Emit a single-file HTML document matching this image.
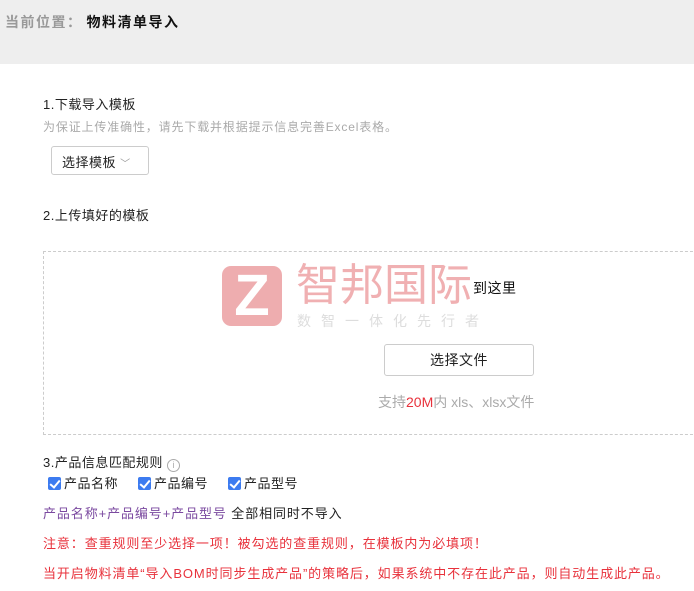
<!DOCTYPE html>
<html><head><meta charset="utf-8"><style>
*{margin:0;padding:0;box-sizing:border-box}
body{width:694px;height:591px;overflow:hidden;background:#fff;font-family:"Liberation Sans","Noto Sans CJK SC",sans-serif;font-size:13px;color:#222;position:relative;letter-spacing:0.5px}
.a{position:absolute;white-space:nowrap}
.hdr{position:absolute;left:0;top:0;width:694px;height:64px;background:#eee}
.cb{display:inline-block;width:13px;height:13px;background:#3c7bf0;border-radius:2px;vertical-align:-2px;margin-right:3px;position:relative}
.cb:after{content:"";position:absolute;left:4px;top:1px;width:4px;height:8px;border:solid #fff;border-width:0 2px 2px 0;transform:rotate(40deg)}
.w{letter-spacing:0.9px}
</style></head><body>
<div class="hdr"></div>
<div class="a" style="left:5px;top:12px;font-size:14px;color:#999;font-weight:bold;letter-spacing:1.5px">当前位置：<span style="color:#111;margin-left:4px">物料清单导入</span></div>
<div class="a" style="left:43px;top:94px">1.下载导入模板</div>
<div class="a" style="left:43px;top:118px;font-size:12px;color:#aaa;letter-spacing:0.85px">为保证上传准确性，请先下载并根据提示信息完善Excel表格。</div>
<div class="a" style="left:51px;top:146px;width:98px;height:29px;border:1px solid #ccc;border-radius:3px;padding:5px 0 0 10px">选择模板 <span style="color:#999;font-size:10px">﹀</span></div>
<div class="a" style="left:43px;top:205px">2.上传填好的模板</div>
<div class="a" style="left:43px;top:251px;width:660px;height:184px;border:1px dashed #ccc;border-right:none"></div>
<div class="a" style="left:222px;top:266px;width:60px;height:60px;background:#eeadaf;border-radius:9px;color:#fff;font-size:58px;font-weight:bold;line-height:60px;text-align:center;font-family:'Liberation Sans',sans-serif;letter-spacing:0">Z</div>
<div class="a" style="left:296px;top:260px;font-size:44px;color:#f0b0b2;letter-spacing:0;line-height:52px">智邦国际</div>
<div class="a" style="left:297px;top:311px;font-size:14px;color:#ddd;letter-spacing:10px">数智一体化先行者</div>
<div class="a" style="left:473px;top:278px;font-size:14px;color:#111">到这里</div>
<div class="a" style="left:384px;top:344px;width:150px;height:32px;border:1px solid #ccc;border-radius:3px;text-align:center;line-height:30px;font-size:14px">选择文件</div>
<div class="a" style="left:378px;top:392px;color:#aaa;font-size:14px;letter-spacing:0">支持<span style="color:#e8323c">20M</span>内 xls、xlsx文件</div>
<div class="a" style="left:43px;top:452px">3.产品信息匹配规则 <span style="display:inline-block;width:13px;height:13px;border:1px solid #aaa;border-radius:50%;font-size:9px;color:#aaa;text-align:center;line-height:11px;vertical-align:-1px;letter-spacing:0">i</span></div>
<div class="a" style="left:48px;top:473px"><span class="cb"></span>产品名称<span style="display:inline-block;width:20px"></span><span class="cb"></span>产品编号<span style="display:inline-block;width:20px"></span><span class="cb"></span>产品型号</div>
<div class="a w" style="left:43px;top:503px;color:#7b4aa0">产品名称+产品编号+产品型号 <span style="color:#222">全部相同时不导入</span></div>
<div class="a w" style="left:43px;top:533px;color:#e8323c">注意：查重规则至少选择一项！被勾选的查重规则，在模板内为必填项！</div>
<div class="a w" style="left:43px;top:563px;color:#e8323c">当开启物料清单“导入BOM时同步生成产品”的策略后，如果系统中不存在此产品，则自动生成此产品。</div>
</body></html>
